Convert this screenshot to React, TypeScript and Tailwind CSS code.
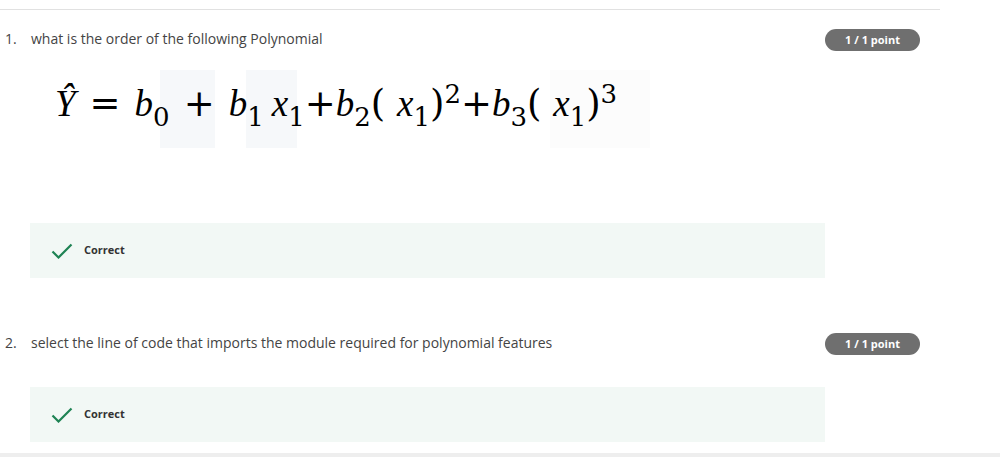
import { Fragment } from 'react'

function PointBadge() {
  return (
    <div className="w-[95px] h-[22px] rounded-full bg-[#6f6f6f] flex items-center justify-center text-white text-[11px] font-bold">
      1 / 1 point
    </div>
  )
}

function CorrectBox() {
  return (
    <div className="ml-[30px] w-[795px] h-[55px] bg-[#f2f8f5] flex items-center">
      <svg width="22" height="16" viewBox="0 0 22 16" className="ml-[21px]">
        <path d="M1.5 8.5 L7.5 14.5 L20.5 1.5" fill="none" stroke="#1f8354" strokeWidth="2.2" />
      </svg>
      <span className="ml-[11px] text-[11px] font-bold text-[#333]">Correct</span>
    </div>
  )
}

const serif = { fontFamily: '"Liberation Serif", serif' }

function V({ v, s }: { v: string; s?: string }) {
  return (
    <Fragment>
      <i style={serif}>{v}</i>
      {s && <sub className="text-[26px] -bottom-[10px]">{s}</sub>}
    </Fragment>
  )
}

function Formula() {
  return (
    <div className="relative h-[85px] mt-[14px] ml-[55px] w-[620px]">
      <div className="absolute left-[105px] top-[5px] w-[55px] h-[78px] bg-[#f6f8fa]" />
      <div className="absolute left-[191px] top-[5px] w-[51px] h-[78px] bg-[#f6f8fa]" />
      <div className="absolute left-[495px] top-[5px] w-[100px] h-[78px] bg-[#fcfcfc]" />
      <div
        className="relative pt-[17px] text-[37px] leading-[44px] text-black whitespace-nowrap"
        style={{ fontFamily: '"DejaVu Serif", serif' }}
      >
        <V v="Ŷ" />
        <span className="mx-[14px]">=</span>
        <V v="b" s="0" />
        <span className="mx-[14px]">+</span>
        <V v="b" s="1" />
        <span className="ml-[8px]" />
        <V v="x" s="1" />
        <span>+</span>
        <V v="b" s="2" />
        <span>( </span>
        <V v="x" s="1" />
        <span>)</span>
        <sup className="text-[26px]">2</sup>
        <span>+</span>
        <V v="b" s="3" />
        <span>( </span>
        <V v="x" s="1" />
        <span>)</span>
        <sup className="text-[26px]">3</sup>
      </div>
    </div>
  )
}

export default function App() {
  return (
    <div
      className="w-[1000px] h-[457px] bg-white relative overflow-hidden text-[#333]"
      style={{ fontFamily: '"Open Sans", "Liberation Sans", sans-serif' }}
    >
      <div className="mt-[9px] w-[940px] border-t border-[#e1e1e1]" />

      <div className="flex items-center justify-between w-[920px] mt-[19px] h-[22px]">
        <div className="flex text-[14px] leading-[18px] text-[#444] -mt-[3px]">
          <span className="w-[31px] pl-[5px]">1.</span>
          <span>what is the order of the following Polynomial</span>
        </div>
        <PointBadge />
      </div>

      <Formula />

      <div className="mt-[73px]">
        <CorrectBox />
      </div>

      <div className="flex items-center justify-between w-[920px] mt-[55px] h-[22px]">
        <div className="flex text-[14px] leading-[18px] text-[#444] -mt-[3px]">
          <span className="w-[31px] pl-[5px]">2.</span>
          <span>select the line of code that imports the module required for polynomial features</span>
        </div>
        <PointBadge />
      </div>

      <div className="mt-[32px]">
        <CorrectBox />
      </div>

      <div className="absolute left-0 bottom-0 w-full h-[4px] bg-[#eeeeee]" />
    </div>
  )
}
